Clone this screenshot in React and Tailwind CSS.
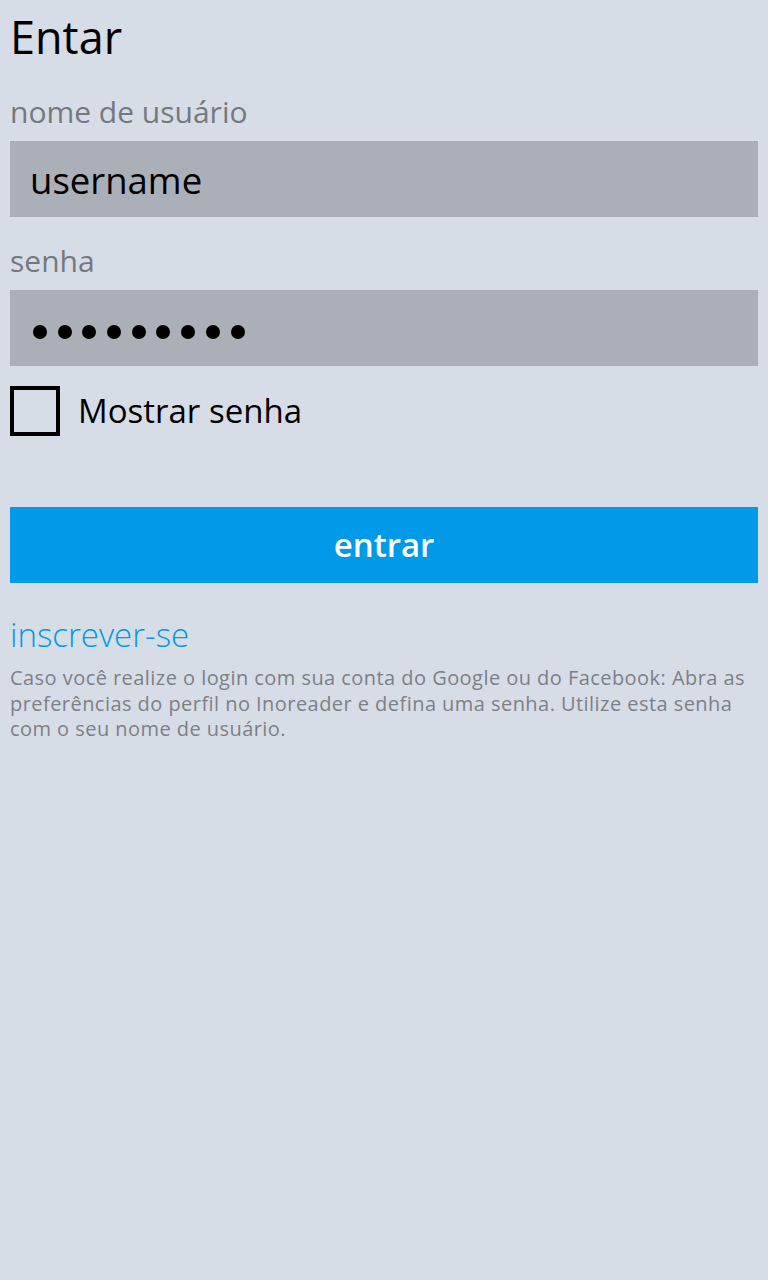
import React from "react";

const dots = Array.from({ length: 9 });

const App = () => {
  return (
    <div className="min-h-screen w-full bg-[#d6dde6] px-[10px] font-['Open_Sans',sans-serif]">
      {/* Title */}
      <h1 className="pt-[7px] text-[45px] leading-[60px] text-black">Entar</h1>

      {/* Username */}
      <div className="mt-[27px] text-[30px] leading-[36px] text-[#75797f]">nome de usuário</div>
      <div className="mt-[11px] h-[76px] bg-[#abb0b8] pl-[20px] text-[36.5px] leading-[78px] text-black">
        username
      </div>

      {/* Password */}
      <div className="mt-[26px] text-[30px] leading-[36px] text-[#75797f]">senha</div>
      <div className="mt-[11px] flex h-[76px] items-center gap-[10.7px] bg-[#abb0b8] pl-[23px] pt-[7px]">
        {dots.map((_, i) => (
          <span key={i} className="h-[14px] w-[14px] rounded-full bg-black" />
        ))}
      </div>

      {/* Show password */}
      <label className="mt-[20px] flex items-center gap-[18px]">
        <span className="h-[50px] w-[50px] border-[4px] border-black" />
        <span className="text-[33px] leading-[50px] text-black">Mostrar senha</span>
      </label>

      {/* Submit */}
      <button className="mt-[71px] block h-[76px] w-full bg-[#009ae9] text-[33px] font-semibold text-white">
        entrar
      </button>

      {/* Sign up */}
      <div className="mt-[32px] text-[33px] font-light leading-[40px] text-[#009ae9]">inscrever-se</div>
      <p className="mt-[10px] text-[20px] leading-[25.5px] tracking-[0.45px] text-[#7d8086]">
        Caso você realize o login com sua conta do Google ou do Facebook: Abra as
        <br />
        preferências do perfil no Inoreader e defina uma senha. Utilize esta senha
        <br />
        com o seu nome de usuário.
      </p>
    </div>
  );
};

export default App;
